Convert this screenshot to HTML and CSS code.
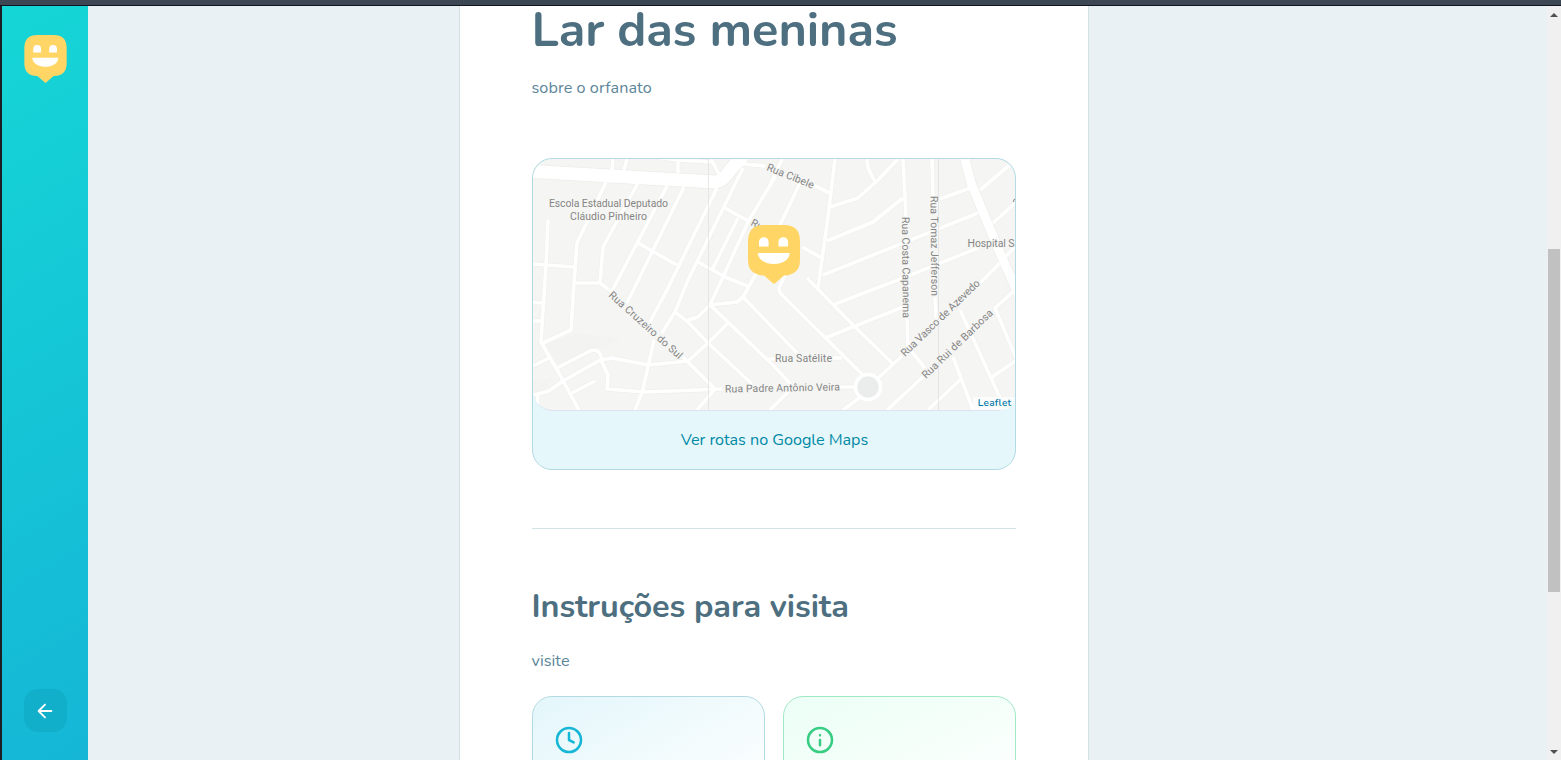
FILE: index.html
```html
<!DOCTYPE html>
<html lang="pt-BR">
<head>
<meta charset="utf-8">
<title>Happy</title>
<link rel="stylesheet" href="styles.css">
</head>
<body>
<svg class="defs" width="0" height="0">
  <symbol id="happy" viewBox="0 0 52 59">
    <path fill="#ffd666" d="M16 0H36Q52 0 52 16V35Q52 50 36 50.500L26.800 58.500Q26 59 25.200 58.500L16 50.500Q0 50 0 35V16Q0 0 16 0Z"/>
    <path fill="#fff" d="M11 21.500V17A4.800 4.800 0 0 1 20.600 17V21.500ZM30.500 21.500V17A4.800 4.800 0 0 1 40.100 17V21.500ZM10.500 28H41.200Q42 28 41.500 30C38 42 14 42 10 30Q9.500 28 10.500 28Z"/>
  </symbol>
</svg>
<div class="window">
  <div class="chrome"></div>
  <div class="app">
    <aside class="sidebar">
      <svg class="logo"><use href="#happy"/></svg>
      <button class="back" aria-label="Voltar">
        <svg width="22" height="22" viewBox="0 0 24 24" fill="none" stroke="#fff" stroke-width="2" stroke-linecap="round" stroke-linejoin="round"><path d="M19 12H5M12 19l-7-7 7-7"/></svg>
      </button>
    </aside>
    <main class="page">
      <article class="card">
        <h1>Lar das meninas</h1>
        <p class="about">sobre o orfanato</p>
        <section class="map">
          <svg class="tiles" viewBox="533 159 482 251">
            <rect x="533" y="159" width="482" height="251" fill="#f5f5f3"/>
            <path fill="#f3f3f1" d="M545 345L575 333 622 339 590 351 560 365ZM533 380L553 378 545 390 533 392Z"/>
            <defs>
              <g id="minor">
                <path d="M606 182L577 243 574 283 571 330 543 343M638 183L603 247 600 283M574 283H600L612 292M667 186L612 291M684 187L627 303M717 188L668 288 650 322M743 168L688 280 675 312 662 333M654 340L648 367 642 393 635 410M775 177L748 222 723 277 710 305M738 218L712 270M725 208L750 222M698 262L725 277 750 287M638 243L677 265"/>
                <path d="M613 159L612 170M627 159L624 170M678 161V173M655 157L678 160 711 162M711 159L720 176M743 164L765 166M813 185L830 193"/>
                <path d="M548 220L546 265 541 342 560 375 579 410M533 264L574 267M533 302L542 303M533 321H541M533 366L549 358M557 368L590 351Q598 348 601 356L602 359 563 381 549 391 533 395M601 360L612 358 648 365 688 361M601 360L608 375 607 389 645 392 722 389M572 393L595 381M538 395L537 405"/>
                <path d="M683 357L715 389 697 410M688 361L708 343 728 323M675 312L688 322 708 343 752 384M688 320L698 317 710 305 737 302 743 297 757 272M710 305L775 367 793 387 770 410M743 297L797 353M767 359H776M833 358H842"/>
                <path d="M785 275L779 288 780 293 866 378M807 278L853 325 892 363M835 159L828 217 818 288M835 304L898 280 978 248M825 338L903 307M823 275L978 213M827 241L873 222 903 198M830 207L858 198 878 180 898 159M867 159L868 168 875 182M903 159L906 217M907 318L908 347 925 368M932 159L933 196M935 297L936 318M940 199L970 188M980 190L1012 163M993 223L1015 203M1006 256L1015 247M1000 263L978 285M1010 280L1015 290 995 308 1017 360 992 377M960 310L1002 402M953 357L973 410M962 378L928 410M925 375L887 410M876 380L902 356M862 396L843 410M840 387H856M802 247L822 258M800 183L780 225M782 159L770 185"/>
              </g>
            </defs>
            <use href="#minor" class="road-edge"/>
            <path class="avenue-edge" d="M525 171L715 182Q724 181 730 170L745 154"/>
            <path class="highway-edge" d="M964 155L971 183 1000 253 1019 296"/>
            <use href="#minor" class="road"/>
            <path class="avenue" d="M525 171L715 182Q724 181 730 170L745 154"/>
            <path class="highway" d="M964 155L971 183 1000 253 1019 296"/>
            <path class="seam" d="M708.500 159V410M938.500 159V410"/>
            <circle cx="868" cy="387" r="12.500" fill="#ebeded" stroke="#fff" stroke-width="3.500"/>
            <g class="labels">
              <text x="549" y="207" textLength="119">Escola Estadual Deputado</text>
              <text x="570" y="220" textLength="77">Cláudio Pinheiro</text>
              <text x="967.500" y="247" textLength="47">Hospital S</text>
              <text x="775" y="362" textLength="57">Rua Satélite</text>
              <text x="725" y="392.500" textLength="115" transform="rotate(-1 725 392)">Rua Padre Antônio Veira</text>
              <text transform="translate(766 170) rotate(22)" textLength="50">Rua Cibele</text>
              <text transform="translate(750 225) rotate(27)">Ru</text>
              <text transform="translate(608 296) rotate(42)" textLength="95">Rua Cruzeiro do Sul</text>
              <text transform="translate(902 217) rotate(89.500)" textLength="101">Rua Costa Capanema</text>
              <text transform="translate(930.500 196) rotate(89.500)" textLength="100">Rua Tomaz Jefferson</text>
              <text transform="translate(905 357) rotate(-44)" textLength="105">Rua Vasco de Azevedo</text>
              <text transform="translate(926 379) rotate(-44)" textLength="94">Rua Rui de Barbosa</text>
            </g>
            <path d="M1016 198.500Q1013 199 1013.500 202" fill="none" stroke="#858585"/>
          </svg>
          <svg class="marker"><use href="#happy"/></svg>
          <a class="leaflet">Leaflet</a>
          <footer class="routes"><a>Ver rotas no Google Maps</a></footer>
        </section>
        <hr>
        <h2>Instruções para visita</h2>
        <p class="visit">visite</p>
        <div class="details">
          <div class="hours">
            <svg viewBox="0 0 24 24" fill="none" stroke="#15b6d6" stroke-width="1.900" stroke-linecap="round" stroke-linejoin="round"><circle cx="12" cy="12" r="9"/><path d="M12 6.700V12l3.500 1.800"/></svg>
          </div>
          <div class="weekends">
            <svg viewBox="0 0 24 24" fill="none" stroke="#39cc83" stroke-width="1.900" stroke-linecap="round" stroke-linejoin="round"><circle cx="12" cy="12" r="9"/><path d="M12 16v-4M12 8.500h.01"/></svg>
          </div>
        </div>
      </article>
    </main>
    <div class="scrollbar"><i class="up"></i><i class="thumb"></i><i class="down"></i></div>
  </div>
</div>
</body>
</html>
```

FILE: styles.css
```css
* { box-sizing: border-box; margin: 0; padding: 0; }
body { font-family: Nunito, Lato, sans-serif; color: #5c8599; overflow: hidden; }
.defs { position: absolute; }
.window { height: 760px; display: flex; flex-direction: column; overflow: hidden; }
.chrome { height: 6px; flex: none; background: #3c4753; border-bottom: 1px solid #10141c; }
.app { flex: 1; min-height: 0; display: flex; border-left: 2px solid #1b1e24; background: #e9f1f4; }
.sidebar { width: 86px; padding: 29px 0 28px; display: flex; flex-direction: column; justify-content: space-between; align-items: center; background: linear-gradient(329.540deg, #15b6d6 0%, #15d6d6 100%); }
.logo { width: 43px; height: 48px; }
.back { width: 43px; height: 43px; border: 0; border-radius: 14px; background: #12afcb; display: flex; align-items: center; justify-content: center; }
.page { flex: 1; overflow: hidden; display: flex; justify-content: center; padding-right: 88px; }
.card { width: 630px; height: 900px; background: #fff; border: 1px solid #d3e2e5; border-width: 0 1px; padding: 0 72px; }
h1, h2 { color: #4d6f80; font-weight: 700; white-space: nowrap; letter-spacing: -.080px; }
h1 { font-size: 48.600px; line-height: 48px; }
h2 { font-size: 32.400px; line-height: 42px; margin-top: 56px; }
p { font-size: 16.200px; line-height: 28px; letter-spacing: .060px; }
.about { margin-top: 20px; }
.visit { margin-top: 20px; }
.map { position: relative; margin-top: 56px; height: 312px; border: 1px solid #b3dae2; border-radius: 20px; background: #e6f7fb; overflow: hidden; }
.tiles { display: block; width: 482px; height: 252px; border-bottom: 1px solid #dde3f0; border-radius: 20px; }
.marker { position: absolute; left: 215px; top: 66px; width: 52px; height: 59px; }
.leaflet { position: absolute; right: 0; top: 238px; padding: 0 3px 0 5px; font-size: 10px; font-weight: 600; line-height: 13px; letter-spacing: .300px; color: #0078a8; background: rgba(255,255,255,.7); border-bottom-right-radius: 18px; }
.routes { height: 58px; line-height: 59px; padding-left: 2px; text-align: center; color: #0089a5; font-size: 16.200px; letter-spacing: -.040px; }
.road, .road-edge, .avenue, .avenue-edge, .highway, .highway-edge, .seam { fill: none; stroke: #fff; stroke-linejoin: round; }
.road { stroke-width: 3.600px; }
.road-edge { stroke-width: 4.800px; stroke: #efefed; }
.avenue { stroke-width: 13px; }
.avenue-edge { stroke-width: 14.500px; stroke: #ececea; }
.highway { stroke-width: 9px; }
.highway-edge { stroke-width: 10.500px; stroke: #ececea; }
.seam { stroke: #dedede; stroke-width: 1px; opacity: .7; }
.labels { font: 10.500px Roboto, sans-serif; fill: #858585; stroke: #f5f5f3; stroke-width: 1.500px; paint-order: stroke; }
hr { border: 0; height: 1px; background: #d3e2e6; margin-top: 58px; }
.details { margin-top: 21px; display: grid; grid-template-columns: 1fr 1fr; gap: 18px; }
.details > div { height: 140px; border: 1px solid #b3dae2; border-radius: 20px; padding: 26.500px 20px; }
.details svg { display: block; width: 32px; height: 32px; }
.hours { background: linear-gradient(149.970deg, #e6f7fb 8.130%, #fff 92.100%); }
.details .weekends { background: linear-gradient(154.160deg, #edfff6 7.850%, #fff 91.030%); border-color: #a1e9c5; }
.scrollbar { width: 14px; background: #f0f0f0; display: flex; flex-direction: column; align-items: center; padding: 7px 1px 6px; }
.scrollbar .thumb { width: 12px; height: 343px; background: #c1c1c1; margin: 232px 0 auto; }
.up { border: 4px solid transparent; border-bottom-color: #505050; border-top: 0; }
.down { border: 4px solid transparent; border-top-color: #505050; border-bottom: 0; }
```
